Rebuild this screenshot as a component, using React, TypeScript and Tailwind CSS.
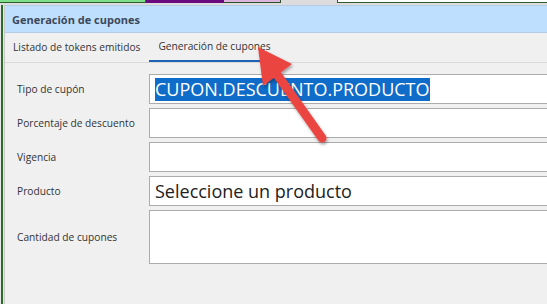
export default function App() {
  const rows = [
    { label: "Tipo de cupón", h: "h-[30px]", value: "CUPON.DESCUENTO.PRODUCTO", selected: true },
    { label: "Porcentaje de descuento", h: "h-[30px]" },
    { label: "Vigencia", h: "h-[30px]" },
    { label: "Producto", h: "h-[30px]", value: "Seleccione un producto" },
    { label: "Cantidad de cupones", h: "h-[54px]" },
  ];

  return (
    <div className="relative w-[547px] h-[304px] overflow-hidden bg-[#f0f0f0] font-['Open_Sans',sans-serif]">
      {/* top strip of windows behind */}
      <div className="flex h-[5px] bg-[#dcdcdc]">
        <div className="shrink-0 w-[146px] h-[3px] bg-[#7fe08c] border-b border-r border-[#2d5f2d]" />
        <div className="shrink-0 w-[78px] h-[3px] bg-[#6b0a7e]" />
        <div className="shrink-0 w-[57px] h-[3px] bg-[#dcb6dc] border-b border-r border-[#2d4f2d]" />
        <div className="shrink-0 w-[56px]" />
        <div className="flex-1 h-[3px] bg-white border-l border-b border-[#2d5f2d]" />
      </div>

      <div className="flex h-[299px]">
        {/* left edges */}
        <div className="shrink-0 w-[1px] bg-[#e8e8e8]" />
        <div className="shrink-0 w-[2px] bg-[#2d6b2d]" />
        <div className="shrink-0 w-[1px] bg-[#e6e6e6]" />
        <div className="flex-1 min-w-0 flex flex-col border-l border-[#c9c9c9]">
          {/* header */}
          <div className="h-[28px] bg-[#bfdfff] border-t border-b border-[#b3cbe4] flex items-center pl-[7px] pt-[2px]">
            <span className="text-[11px] font-bold text-[#3b4858]">Generación de cupones</span>
          </div>

          {/* tabs */}
          <div className="h-[30px] flex items-end border-b border-[#d9d9d9] pl-[2px]">
            <div className="h-full flex items-center px-[6px] text-[10.2px] text-[#333]">
              Listado de tokens emitidos
            </div>
            <div className="h-full flex items-center px-[9px] ml-[3px] text-[10.2px] text-[#333] border-b-2 border-[#1e63b8]">
              Generación de cupones
            </div>
          </div>

          {/* form */}
          <div className="flex flex-col gap-[4px] pt-[11px]">
            {rows.map((r) => (
              <div key={r.label} className="flex items-center">
                <div className="shrink-0 w-[144px] pl-[12px] pt-[2px] text-[10.2px] text-[#333]">{r.label}</div>
                <div className={`${r.h} shrink-0 w-[420px] bg-white border border-[#acacac] flex items-center px-[5px]`}>
                  {r.value && (
                    <span
                      className={
                        r.selected
                          ? "text-[18px] leading-[23px] bg-[#0f6cc9] text-white"
                          : "text-[18px] leading-[23px] text-[#222]"
                      }
                    >
                      {r.value}
                    </span>
                  )}
                </div>
              </div>
            ))}
          </div>
        </div>
      </div>

      {/* annotation arrow */}
      <svg className="absolute left-0 top-0 pointer-events-none" width="547" height="304">
        <defs>
          <filter id="sh" x="-20%" y="-20%" width="140%" height="140%">
            <feDropShadow dx="1" dy="2" stdDeviation="1.5" floodColor="#000" floodOpacity="0.35" />
          </filter>
        </defs>
        <g filter="url(#sh)">
          <line x1="276" y1="73" x2="322" y2="138" stroke="#ea4440" strokeWidth="9" strokeLinecap="round" />
          <polygon points="258,47 292,64 263,86" fill="#ea4440" />
        </g>
      </svg>
    </div>
  );
}
